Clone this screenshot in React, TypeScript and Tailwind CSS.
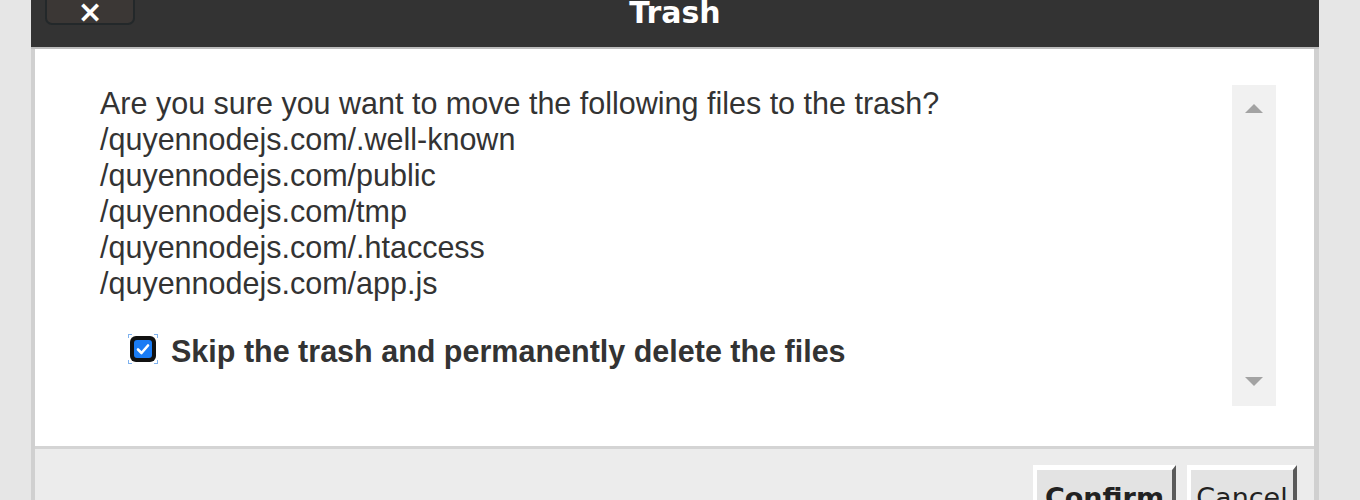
import React from "react";

const files = [
  "/quyennodejs.com/.well-known",
  "/quyennodejs.com/public",
  "/quyennodejs.com/tmp",
  "/quyennodejs.com/.htaccess",
  "/quyennodejs.com/app.js",
];

export default function App() {
  return (
    <div className="w-[1360px] h-[500px] overflow-hidden bg-[#e6e6e6] pl-[31px]">
      <div className="w-[1288px] -mt-[30px] flex flex-col">
        {/* header */}
        <div className="h-[79px] bg-[#333333] border-b-2 border-[#bdbdbd] relative flex items-center justify-center">
          <div className="absolute left-[14px] top-[18px] w-[90px] h-[37px] rounded-[7px] bg-[#3b3735] border-2 border-[#23282a] flex items-start justify-center">
            <span
              className="text-white text-[30px] leading-[30px] font-bold mt-[7px]"
              style={{ fontFamily: '"DejaVu Sans", Verdana, sans-serif' }}
            >
              ×
            </span>
          </div>
          <span
            className="text-white text-[30px] font-bold mt-[7px]"
            style={{ fontFamily: '"DejaVu Sans", Verdana, sans-serif' }}
          >
            Trash
          </span>
        </div>
        {/* body + footer with side borders */}
        <div className="border-l-[4px] border-r-[5px] border-[#d0d0d0] flex flex-col">
          <div className="h-[400px] bg-white border-b-[3px] border-[#d4d4d4] pt-[36px]">
            <div className="ml-[65px] mr-[38px] h-[321px] flex">
              <div
                className="flex-1 text-[30.5px] leading-[36px] text-[#333]"
                style={{ fontFamily: '"Liberation Sans", Arial, sans-serif' }}
              >
                <div>Are you sure you want to move the following files to the trash?</div>
                {files.map((f) => (
                  <div key={f}>{f}</div>
                ))}
                <div className="flex items-center mt-[28px] ml-[28px] gap-[13px]">
                  <div className="relative w-[30px] h-[30px] flex items-center justify-center shrink-0">
                    <div className="w-[26px] h-[26px] rounded-[6px] bg-[#111] flex items-center justify-center">
                      <div className="w-[18px] h-[18px] rounded-[3px] bg-[#1a7cf5] flex items-center justify-center">
                        <svg width="16" height="16" viewBox="0 0 16 16">
                          <path d="M3 8.5 L6.5 12 L13 4.5" fill="none" stroke="white" strokeWidth="2.6" strokeLinecap="round" strokeLinejoin="round" />
                        </svg>
                      </div>
                    </div>
                    <div className="absolute left-0 top-0 w-[4px] h-[4px] border-l border-t border-[#7fb2ee]" />
                    <div className="absolute right-0 top-0 w-[4px] h-[4px] border-r border-t border-[#7fb2ee]" />
                    <div className="absolute left-0 bottom-0 w-[4px] h-[4px] border-l border-b border-[#7fb2ee]" />
                    <div className="absolute right-0 bottom-0 w-[4px] h-[4px] border-r border-b border-[#7fb2ee]" />
                  </div>
                  <span className="font-bold mt-[4px]">Skip the trash and permanently delete the files</span>
                </div>
              </div>
              <div className="w-[44px] bg-[#f1f1f1] flex flex-col items-center justify-between pt-[19px] pb-[20px]">
                <div className="w-0 h-0 border-l-[9px] border-r-[9px] border-b-[9px] border-l-transparent border-r-transparent border-b-[#a3a3a3]" />
                <div className="w-0 h-0 border-l-[9px] border-r-[9px] border-t-[9px] border-l-transparent border-r-transparent border-t-[#a3a3a3]" />
              </div>
            </div>
          </div>
          <div className="h-[60px] bg-[#ececec] flex justify-end items-start pt-[16px] pr-[17px] gap-[11px]">
            <button
              className="h-[50px] bg-[#e3e3e3] border-t-[5px] border-l-[4px] border-r-[4px] border-b-[4px] border-t-white border-l-white border-r-[#5a5a5a] border-b-[#5a5a5a] text-[27px] font-bold text-[#222] leading-[40px] w-[143px] pt-[8px]"
              style={{ fontFamily: '"DejaVu Sans", Tahoma, sans-serif' }}
            >
              Confirm
            </button>
            <button
              className="h-[50px] bg-[#e3e3e3] border-t-[5px] border-l-[4px] border-r-[4px] border-b-[4px] border-t-white border-l-white border-r-[#5a5a5a] border-b-[#5a5a5a] text-[27px] text-[#222] leading-[40px] w-[110px] pt-[8px]"
              style={{ fontFamily: '"DejaVu Sans", Tahoma, sans-serif' }}
            >
              Cancel
            </button>
          </div>
        </div>
      </div>
    </div>
  );
}
